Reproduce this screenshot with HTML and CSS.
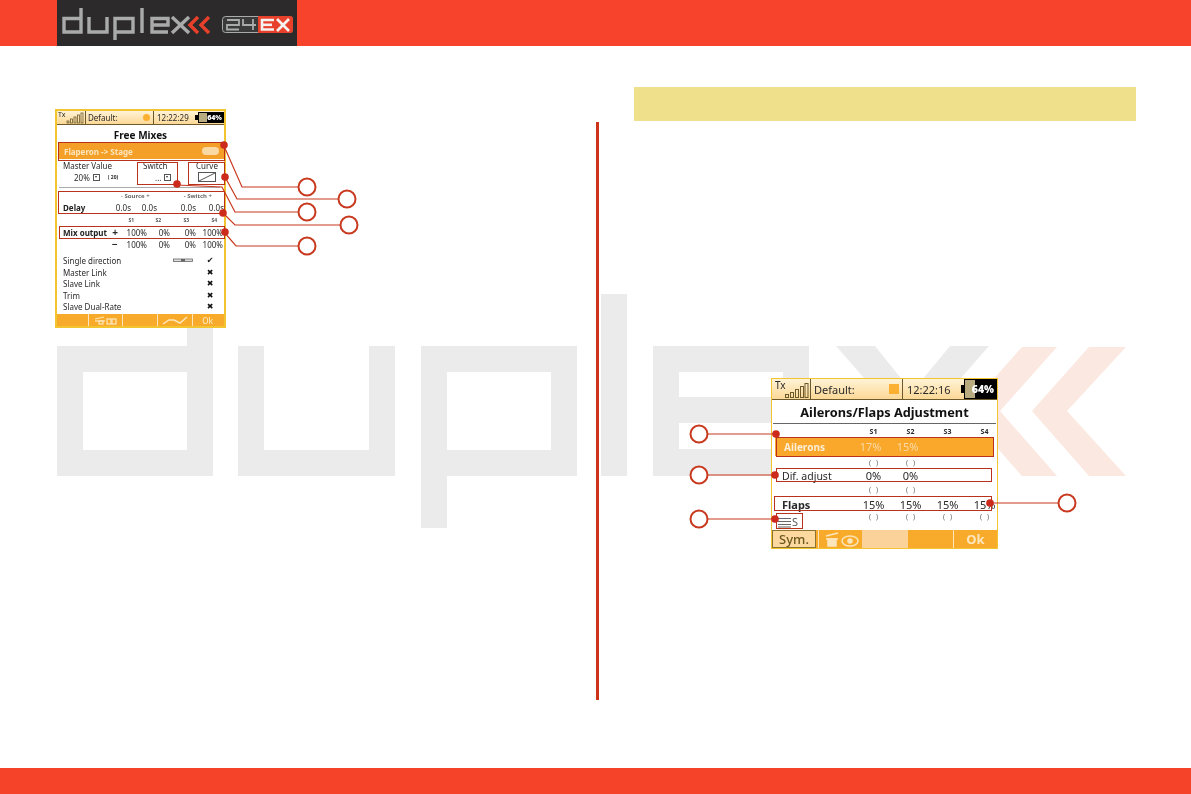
FILE: index.html
```html
<!DOCTYPE html>
<html lang="en">
<head>
  <meta charset="UTF-8">
  <title>duplex 2.4EX</title>
  <link rel="stylesheet" href="styles.css">
</head>
<body>
  <div class="page">
    <!-- big logo behind the text -->
    <svg class="watermark" width="1191" height="794" viewBox="0 0 1191 794" aria-hidden="true">
      <g fill="#ebebeb">
        <path fill-rule="evenodd" d="M57 346H187V294H213V476H57ZM83 372V450H187V372Z"/>
        <path d="M238 346H264V450H369V346H395V476H238Z"/>
        <path fill-rule="evenodd" d="M421 346H577V476H447V528H421ZM447 372V450H551V372Z"/>
        <rect x="601" y="294" width="26" height="182"/>
        <path fill-rule="evenodd" d="M653 346H809V423H679V449H809V476H653ZM679 372V397H783V372Z"/>
        <path d="M836 346H875L912 392L950 346H989L932 411L989 476H950L912 430L875 476H836L893 411Z"/>
      </g>
      <g fill="#fbe8e0">
        <polygon points="1022,347 1057,347 1000,411 1057,476 1022,476 965,411"/>
        <polygon points="1089,347 1126,347 1067,411 1126,476 1089,476 1032,411"/>
      </g>
    </svg>

    <header class="top">
      <div class="logo">
        <svg width="240" height="46" viewBox="0 0 240 46" role="img" aria-label="duplex 2.4EX">
          <g fill="none" stroke="#a9abaa" stroke-width="3.4">
            <polyline points="24,8 24,32 7,32 7,18.5 24,18.5"/>
            <polyline points="32,17 32,32 50,32 50,17"/>
            <polyline points="58,40 58,18.5 76,18.5 76,32 58,32"/>
            <line x1="85" y1="8" x2="85" y2="33"/>
            <polyline points="111,32 95,32 95,18.5 111,18.5 111,25 95,25"/>
            <line x1="115" y1="17" x2="132" y2="33"/>
            <line x1="132" y1="17" x2="115" y2="33"/>
          </g>
          <g fill="none" stroke="#e8412b" stroke-width="3.4">
            <polyline points="141,17 133,25 141,33"/>
            <polyline points="152,17 144,25 152,33"/>
          </g>
          <rect x="165.500" y="16.500" width="70" height="16" rx="3" fill="#3a3a3a" stroke="#a9abaa"/>
          <path d="M201 16H233a3 3 0 0 1 3 3V30a3 3 0 0 1-3 3H201Z" fill="#e8412b"/>
          <g fill="none" stroke="#a9abaa" stroke-width="1.800">
            <polyline points="170,20 182,20 182,25 170,25 170,29.500 182,29.500"/>
            <polyline points="186,19 186,25 199,25"/>
            <line x1="196" y1="19" x2="196" y2="30"/>
          </g>
          <g fill="none" stroke="#f4f1ee" stroke-width="2.600">
            <polyline points="217,20 205,20 205,29.500 217,29.500"/>
            <line x1="205" y1="24.800" x2="215" y2="24.800"/>
            <line x1="220" y1="19" x2="232" y2="31"/>
            <line x1="232" y1="19" x2="220" y2="31"/>
          </g>
        </svg>
      </div>
    </header>

    <main class="cols">
      <section class="col-left">
        <div class="screen screen-free">
          <div class="status">
            <div class="st-tx">
              <span>Tx</span>
              <svg width="18" height="12" viewBox="0 0 18 12"><g fill="none" stroke="#6d5a2c" stroke-width=".8"><rect x="1" y="9" width="2" height="2"/><rect x="4.500" y="7" width="2" height="4"/><rect x="8" y="5" width="2" height="6"/><rect x="11.500" y="3" width="2" height="8"/><rect x="15" y="1" width="2" height="10"/></g></svg>
            </div>
            <div class="st-name">Default:<i class="led led-round"></i></div>
            <div class="st-time">12:22:29</div>
            <div class="st-batt"><i></i><b>64%</b></div>
          </div>
          <h2 class="scr-title">Free Mixes</h2>
          <div class="sel-row">
            <span>Flaperon -&gt; Stage</span>
            <em class="chip"></em>
          </div>
          <div class="master">
            <div class="m-cell m-value">
              <span>Master Value</span>
              <div class="m-line"><span>20%</span><i class="drop"></i><small>( 20)</small></div>
            </div>
            <div class="m-cell m-switch">
              <span>Switch</span>
              <div class="m-line"><span>...</span><i class="drop"></i></div>
            </div>
            <div class="m-cell m-curve">
              <span>Curve</span>
              <svg width="18" height="10" viewBox="0 0 18 10"><rect x=".5" y=".5" width="17" height="9" fill="#fff" stroke="#555"/><line x1="1" y1="9" x2="17" y2="1" stroke="#555"/></svg>
            </div>
          </div>
          <div class="delay-head"><span>- Source +</span><span>- Switch +</span></div>
          <div class="grid-row delay"><b>Delay</b><span>0.0s</span><span>0.0s</span><span>0.0s</span><span>0.0s</span></div>
          <div class="grid-row s-row"><i></i><i></i><span>S1</span><span>S2</span><span>S3</span><span>S4</span></div>
          <div class="grid-row mix"><b>Mix output</b><strong>+</strong><span>100%</span><span>0%</span><span>0%</span><span>100%</span></div>
          <div class="grid-row mix"><i></i><strong>&minus;</strong><span>100%</span><span>0%</span><span>0%</span><span>100%</span></div>
          <ul class="opts">
            <li><span>Single direction</span><svg width="20" height="5" viewBox="0 0 20 5"><rect x=".5" y="1" width="19" height="2.500" fill="#ddd" stroke="#666" stroke-width=".8"/><rect x="8" y="1" width="4" height="2.500" fill="#666"/></svg><b>&#10004;</b></li>
            <li><span>Master Link</span><b>&#10006;</b></li>
            <li><span>Slave Link</span><b>&#10006;</b></li>
            <li><span>Trim</span><b>&#10006;</b></li>
            <li><span>Slave Dual-Rate</span><b>&#10006;</b></li>
          </ul>
          <div class="softkeys">
            <div class="key"></div>
            <div class="key key-box">
              <svg width="26" height="9" viewBox="0 0 26 9"><g fill="none" stroke="#fde6bd" stroke-width="1.200"><line x1="2" y1="3" x2="11" y2="1"/><line x1="2" y1="5" x2="12" y2="5"/><rect x="6" y="5" width="4" height="3"/><rect x="14" y="3" width="4" height="5"/><rect x="19" y="3" width="4" height="5"/></g></svg>
            </div>
            <div class="key"></div>
            <div class="key key-box">
              <svg width="26" height="9" viewBox="0 0 26 9"><polyline points="1,8 7,4 12,4 18,7 25,1" fill="none" stroke="#fde6bd" stroke-width="1.500"/></svg>
            </div>
            <div class="key key-ok">Ok</div>
          </div>
        </div>
      </section>

      <section class="col-right">
        <div class="note-band"></div>
        <div class="col-body">
          <div class="screen screen-flaps">
            <div class="status">
              <div class="st-tx">
                <span>Tx</span>
                <svg width="25" height="17" viewBox="0 0 25 17"><g fill="none" stroke="#6d5a2c"><rect x="1.500" y="12.500" width="3" height="3"/><rect x="6.500" y="10.500" width="3" height="5"/><rect x="11.500" y="7.500" width="3" height="8"/><rect x="16.500" y="4.500" width="3" height="11"/><rect x="21" y="1.500" width="3" height="14"/></g></svg>
              </div>
              <div class="st-name">Default:<i class="led"></i></div>
              <div class="st-time">12:22:16</div>
              <div class="st-batt"><i></i><b>64%</b></div>
            </div>
            <h2 class="scr-title">Ailerons/Flaps Adjustment</h2>
            <div class="val-row heads"><i></i><span>S1</span><span>S2</span><span>S3</span><span>S4</span></div>
            <div class="val-row sel"><b>Ailerons</b><span>17%</span><span>15%</span></div>
            <div class="val-row brackets"><i></i><span>( )</span><span>( )</span></div>
            <div class="val-row dif"><span>Dif. adjust</span><span>0%</span><span>0%</span></div>
            <div class="val-row brackets tall"><i></i><span>( )</span><span>( )</span></div>
            <div class="val-row flaps"><b>Flaps</b><span>15%</span><span>15%</span><span>15%</span><span>15%</span></div>
            <div class="val-row brackets last">
              <div class="stack">
                <svg width="14" height="12" viewBox="0 0 14 12"><g stroke="#666"><line x1="1" y1="2.500" x2="14" y2="2.500"/><line x1="1" y1="5.500" x2="14" y2="5.500"/><line x1="1" y1="8.500" x2="14" y2="8.500"/><line x1="1" y1="11" x2="14" y2="11"/></g></svg>
                <span>S</span>
              </div>
              <span>( )</span><span>( )</span><span>( )</span><span>( )</span>
            </div>
            <div class="softkeys">
              <div class="key key-sym">Sym.</div>
              <div class="key key-eye">
                <svg width="36" height="16" viewBox="0 0 36 16"><g fill="none" stroke="#fde6bd" stroke-width="1.500"><line x1="3" y1="5" x2="15" y2="2"/><line x1="3" y1="8" x2="15" y2="8"/><rect x="5" y="8" width="8" height="7" fill="#fde6bd"/><ellipse cx="27" cy="10" rx="8" ry="5"/><circle cx="27" cy="10" r="2" fill="#fde6bd"/></g></svg>
              </div>
              <div class="key key-pale"></div>
              <div class="key key-blank"></div>
              <div class="key key-ok">Ok</div>
            </div>
          </div>
        </div>
      </section>
    </main>

    <footer class="bottom"></footer>

    <!-- callouts sit on top of the screens -->
    <svg class="callouts" width="1191" height="794" viewBox="0 0 1191 794" aria-hidden="true">
      <g class="boxes">
        <rect x="58.500" y="142.500" width="166" height="18"/>
        <rect x="137.500" y="162.500" width="40" height="22"/>
        <rect x="188.500" y="162.500" width="36" height="22"/>
        <rect x="58.500" y="191.500" width="166" height="22"/>
        <rect x="59.500" y="226.500" width="165" height="12"/>
        <rect x="776.500" y="437.500" width="217" height="19"/>
        <rect x="776.500" y="468.500" width="215" height="13"/>
        <rect x="774.500" y="496.500" width="217" height="14"/>
        <rect x="776.500" y="513.500" width="26" height="15"/>
      </g>
      <g class="leads">
        <polyline points="224,146 242,187 298,187"/>
        <polyline points="225,177 237,199 338,199"/>
        <polyline points="177,185 222,187 235,212 298,212"/>
        <polyline points="223,213 235,225 340,225"/>
        <polyline points="224,232 236,246 298,246"/>
        <line x1="776" y1="434" x2="708" y2="434"/>
        <line x1="775" y1="475" x2="708" y2="475"/>
        <line x1="775" y1="519" x2="708" y2="519"/>
        <line x1="990" y1="503" x2="1058" y2="503"/>
      </g>
      <g class="dots">
        <circle cx="224" cy="145" r="3.800"/>
        <circle cx="225" cy="177" r="3.800"/>
        <circle cx="177" cy="184" r="3.800"/>
        <circle cx="223" cy="213" r="3.800"/>
        <circle cx="225" cy="232" r="3.800"/>
        <circle cx="776" cy="434" r="3.800"/>
        <circle cx="775" cy="475" r="3.800"/>
        <circle cx="775" cy="519" r="3.800"/>
        <circle cx="990" cy="503" r="3.800"/>
      </g>
      <g class="rings">
        <circle cx="307" cy="187" r="8.500"/>
        <circle cx="347" cy="199" r="8.500"/>
        <circle cx="307" cy="212" r="8.500"/>
        <circle cx="349" cy="225" r="8.500"/>
        <circle cx="307" cy="246" r="8.500"/>
        <circle cx="699" cy="434" r="8.500"/>
        <circle cx="699" cy="475" r="8.500"/>
        <circle cx="699" cy="519" r="8.500"/>
        <circle cx="1067" cy="503" r="8.500"/>
      </g>
    </svg>
  </div>
</body>
</html>
```

FILE: styles.css
```css
* {
  box-sizing: border-box;
}
body {
  margin: 0;
  background: #fff;
  font-family: "Noto Sans", "DejaVu Sans", sans-serif;
  color: #2a2a2a;
}
.page {
  position: relative;
  width: 1191px;
  height: 794px;
  display: flex;
  flex-direction: column;
  overflow: hidden;
}
.watermark {
  position: absolute;
  top: 0;
  left: 0;
}
.callouts {
  position: absolute;
  top: 0;
  left: 0;
}
.boxes rect {
  fill: none;
  stroke: #b8321c;
  stroke-width: 1;
}
.leads polyline,
.leads line {
  fill: none;
  stroke: #c8391f;
  stroke-width: 1.200;
}
.dots circle {
  fill: #cc2a1a;
}
.rings circle {
  fill: #fff;
  stroke: #c8391f;
  stroke-width: 2;
}

.top {
  position: relative;
  height: 46px;
  padding-left: 57px;
  background: #f7432b;
}
.logo {
  width: 240px;
  height: 46px;
  background: #2c2a2b;
}
.logo svg {
  display: block;
  filter: blur(.3px);
}
.bottom {
  position: relative;
  height: 26px;
  background: #f5432a;
}
.cols {
  position: relative;
  flex: 1;
  display: flex;
}
.col-left {
  width: 596px;
  padding: 63px 0 0 55px;
}
.col-right {
  flex: 1;
  padding-top: 41px;
}
.note-band {
  width: 502px;
  height: 34px;
  margin-left: 38px;
  background: #efe18c;
}
.col-body {
  height: 578px;
  margin-top: 1px;
  padding: 256px 0 0 172px;
  border-left: 3px solid #cc3318;
}

/* transmitter screens */
.screen {
  display: flex;
  flex-direction: column;
  background: #fff;
  border: 1px solid #f2c530;
  overflow: hidden;
  filter: blur(.35px);
}
.status {
  display: flex;
  align-items: stretch;
  background: linear-gradient(#fff3d6, #fcd896);
  border-bottom: 1px solid #6d5a2c;
}
.st-tx {
  position: relative;
  display: flex;
  align-items: flex-end;
  border-right: 1px solid #6d5a2c;
}
.st-tx svg {
  display: block;
}
.st-name {
  display: flex;
  align-items: center;
  justify-content: space-between;
  border-right: 1px solid #6d5a2c;
}
.st-time {
  display: flex;
  align-items: center;
}
.st-batt {
  position: relative;
  margin-left: auto;
  display: flex;
  align-items: center;
  justify-content: flex-end;
  background: #000;
  color: #fff;
}
.st-batt i {
  position: absolute;
  left: 1px;
  top: 1px;
  bottom: 1px;
  background: #b9ab80;
}
.st-batt::before {
  content: "";
  position: absolute;
  left: -3px;
  top: 30%;
  bottom: 30%;
  width: 3px;
  background: #000;
}
.st-batt b {
  position: relative;
}
.led {
  display: block;
  background: #fbb032;
}
.led-round {
  border-radius: 50%;
}
.scr-title {
  margin: 0;
  font-weight: 700;
  text-align: center;
  color: #111;
}
.softkeys {
  margin-top: auto;
  display: flex;
  background: #f8ab2a;
  color: #fde6bd;
}
.key {
  display: flex;
  align-items: center;
  justify-content: center;
}
.key-ok {
  font-weight: 700;
}

/* left screen: free mixes */
.screen-free {
  width: 171px;
  height: 219px;
  border-width: 2px;
  font-size: 8px;
  line-height: 11px;
}
.screen-free .status {
  height: 14px;
  flex: none;
}
.screen-free .st-tx {
  width: 29px;
  padding-left: 9px;
}
.screen-free .st-tx span {
  position: absolute;
  left: 1px;
  top: 0;
  font-size: 7px;
  line-height: 8px;
}
.screen-free .st-name {
  width: 68px;
  padding: 0 3px 0 2px;
}
.screen-free .led {
  width: 7px;
  height: 7px;
}
.screen-free .st-time {
  padding-left: 3px;
}
.screen-free .st-batt {
  width: 26px;
  margin-top: 1px;
  margin-bottom: 1px;
  font-size: 7px;
  font-weight: 700;
  padding-right: 2px;
}
.screen-free .st-batt i {
  width: 8px;
}
.screen-free .scr-title {
  height: 18px;
  font-size: 10px;
  line-height: 20px;
}
.sel-row {
  flex: none;
  height: 16px;
  margin: 0 0 0 2px;
  padding: 0 5px 0 5px;
  display: flex;
  align-items: center;
  justify-content: space-between;
  background: #f39f28;
  color: #fde6bd;
  font-size: 8px;
  font-weight: 700;
}
.chip {
  width: 17px;
  height: 8px;
  border-radius: 4px;
  background: #fbd9a2;
}
.master {
  flex: none;
  height: 29px;
  margin: 0 4px 0 2px;
  padding-top: 1px;
  display: grid;
  grid-template-columns: 78px 51px 1fr;
  border-bottom: 1px solid #aaa;
}
.m-cell {
  display: flex;
  flex-direction: column;
  align-items: center;
  line-height: 11px;
}
.m-value {
  align-items: flex-start;
  padding-left: 4px;
}
.m-value .m-line {
  padding-left: 11px;
}
.m-line {
  display: flex;
  align-items: center;
  gap: 3px;
  height: 13px;
}
.m-switch {
  align-items: flex-start;
  padding-left: 6px;
}
.m-switch .m-line {
  padding-left: 12px;
}
.m-curve {
  padding-left: 6px;
}
.m-line small {
  margin-left: 5px;
  font-size: 5px;
  font-weight: 700;
}
.m-curve svg {
  margin-top: 1px;
  display: block;
}
.drop {
  display: block;
  position: relative;
  width: 7px;
  height: 7px;
  border: 1px solid #555;
}
.drop::after {
  content: "";
  position: absolute;
  left: 1px;
  top: 1px;
  border: 1.500px solid transparent;
  border-top: 2px solid #333;
}
.delay-head {
  flex: none;
  height: 13px;
  padding: 3px 12px 0 64px;
  display: flex;
  justify-content: space-between;
  font-size: 6px;
  font-weight: 700;
  color: #666;
}
.grid-row {
  flex: none;
  display: grid;
  padding-left: 6px;
  justify-items: end;
  align-items: center;
}
.grid-row b {
  justify-self: start;
  color: #222;
}
.grid-row i {
  display: block;
}
.delay {
  height: 12px;
  grid-template-columns: 45px 23px 26px 39px 28px;
}
.s-row {
  height: 13px;
  padding-top: 1px;
  grid-template-columns: 45px 14px 12px 27px 28px 28px;
  font-size: 5px;
  font-weight: 700;
  color: #555;
}
.mix {
  height: 12px;
  grid-template-columns: 45px 14px 25px 23px 26px 27px;
}
.mix strong {
  justify-self: center;
  font-size: 10px;
}
.opts {
  flex: none;
  list-style: none;
  margin: 5px 0 0;
  padding: 0 0 0 6px;
}
.opts li {
  position: relative;
  height: 11.500px;
  display: flex;
  align-items: center;
  justify-content: space-between;
  padding-right: 10px;
}
.opts b {
  width: 8px;
  text-align: center;
  font-family: "DejaVu Sans", sans-serif;
  font-size: 8px;
  color: #111;
}
.opts svg {
  margin-left: 34px;
}
.opts span {
  width: 63px;
  white-space: nowrap;
}
.screen-free .softkeys {
  flex: none;
  height: 12px;
  margin-left: -2px;
  margin-right: -2px;
}
.screen-free .key:nth-child(1) {
  width: 33px;
}
.screen-free .key:nth-child(2) {
  width: 35px;
}
.screen-free .key:nth-child(3) {
  width: 34px;
}
.screen-free .key:nth-child(4) {
  width: 36px;
}
.screen-free .key-box {
  border-left: 1px solid #fde6bd;
  border-right: 1px solid #fde6bd;
}
.screen-free .key-ok {
  flex: 1;
  padding-right: 4px;
  font-size: 8px;
  font-weight: 500;
}

/* right screen: ailerons and flaps */
.screen-flaps {
  width: 227px;
  height: 171px;
  font-size: 11px;
}
.screen-flaps .status {
  flex: none;
  height: 21px;
  font-size: 11px;
}
.screen-flaps .st-tx {
  width: 39px;
  padding-left: 12px;
}
.screen-flaps .st-tx span {
  position: absolute;
  left: 3px;
  top: 0;
  font-size: 10px;
  line-height: 13px;
}
.screen-flaps .st-name {
  width: 92px;
  padding: 0 3px 0 3px;
}
.screen-flaps .led {
  width: 10px;
  height: 10px;
}
.screen-flaps .st-time {
  padding-left: 4px;
}
.screen-flaps .st-batt {
  width: 33px;
  padding-right: 3px;
  font-weight: 700;
  font-size: 10.500px;
}
.screen-flaps .st-batt i {
  width: 10px;
}
.screen-flaps .scr-title {
  flex: none;
  height: 24px;
  margin: 0 1px;
  font-size: 12.750px;
  line-height: 25px;
  border-bottom: 1px solid #666;
}
.val-row {
  flex: none;
  display: grid;
  grid-template-columns: 73px repeat(4, 37px);
  align-items: center;
  justify-items: center;
  padding-left: 10px;
}
.val-row > b,
.val-row > span:first-child {
  justify-self: start;
}
.val-row i {
  display: block;
}
.heads {
  height: 13px;
  padding-top: 3px;
  font-size: 7px;
  line-height: 10px;
  font-weight: 700;
}
.val-row.sel {
  height: 19px;
  margin: 0 3px;
  padding-left: 9px;
  grid-template-columns: 68px repeat(4, 37px);
  background: #f9a82c;
  color: #fbd9a5;
}
.val-row.sel b {
  font-size: 10px;
  color: #fdeed6;
}
.brackets {
  height: 12px;
  font-size: 7px;
  color: #666;
  word-spacing: 3px;
}
.brackets.tall {
  height: 14px;
}
.brackets > span:first-child {
  justify-self: center;
}
.dif {
  height: 14px;
  font-size: 10.500px;
}
.dif > span:not(:first-child) {
  font-size: 11px;
}
.flaps {
  height: 14px;
  padding-top: 3px;
  line-height: 12px;
}
.brackets.last {
  height: 20px;
  padding: 2px 0 0;
  grid-template-columns: 83px repeat(4, 37px);
  align-items: start;
}
.stack {
  justify-self: start;
  display: flex;
  align-items: flex-end;
  gap: 1px;
  height: 13px;
  margin: 3px 0 0 5px;
  font-size: 11px;
  line-height: 13px;
  color: #555;
}
.stack svg {
  display: block;
}
.screen-flaps .softkeys {
  flex: none;
  height: 18px;
}
.key-sym {
  width: 44px;
  background: #fdd9a0;
  border: 1px solid #8a7433;
  color: #6b5720;
  font-size: 13px;
  font-weight: 500;
}
.key-eye {
  width: 44px;
  margin-left: 2px;
  border-left: 1px solid #fde6bd;
}
.key-pale {
  width: 46px;
  background: #fbd29a;
}
.key-blank {
  width: 45px;
}
.screen-flaps .key-ok {
  flex: 1;
  border-left: 1px solid #fde6bd;
  font-size: 13px;
}
```
